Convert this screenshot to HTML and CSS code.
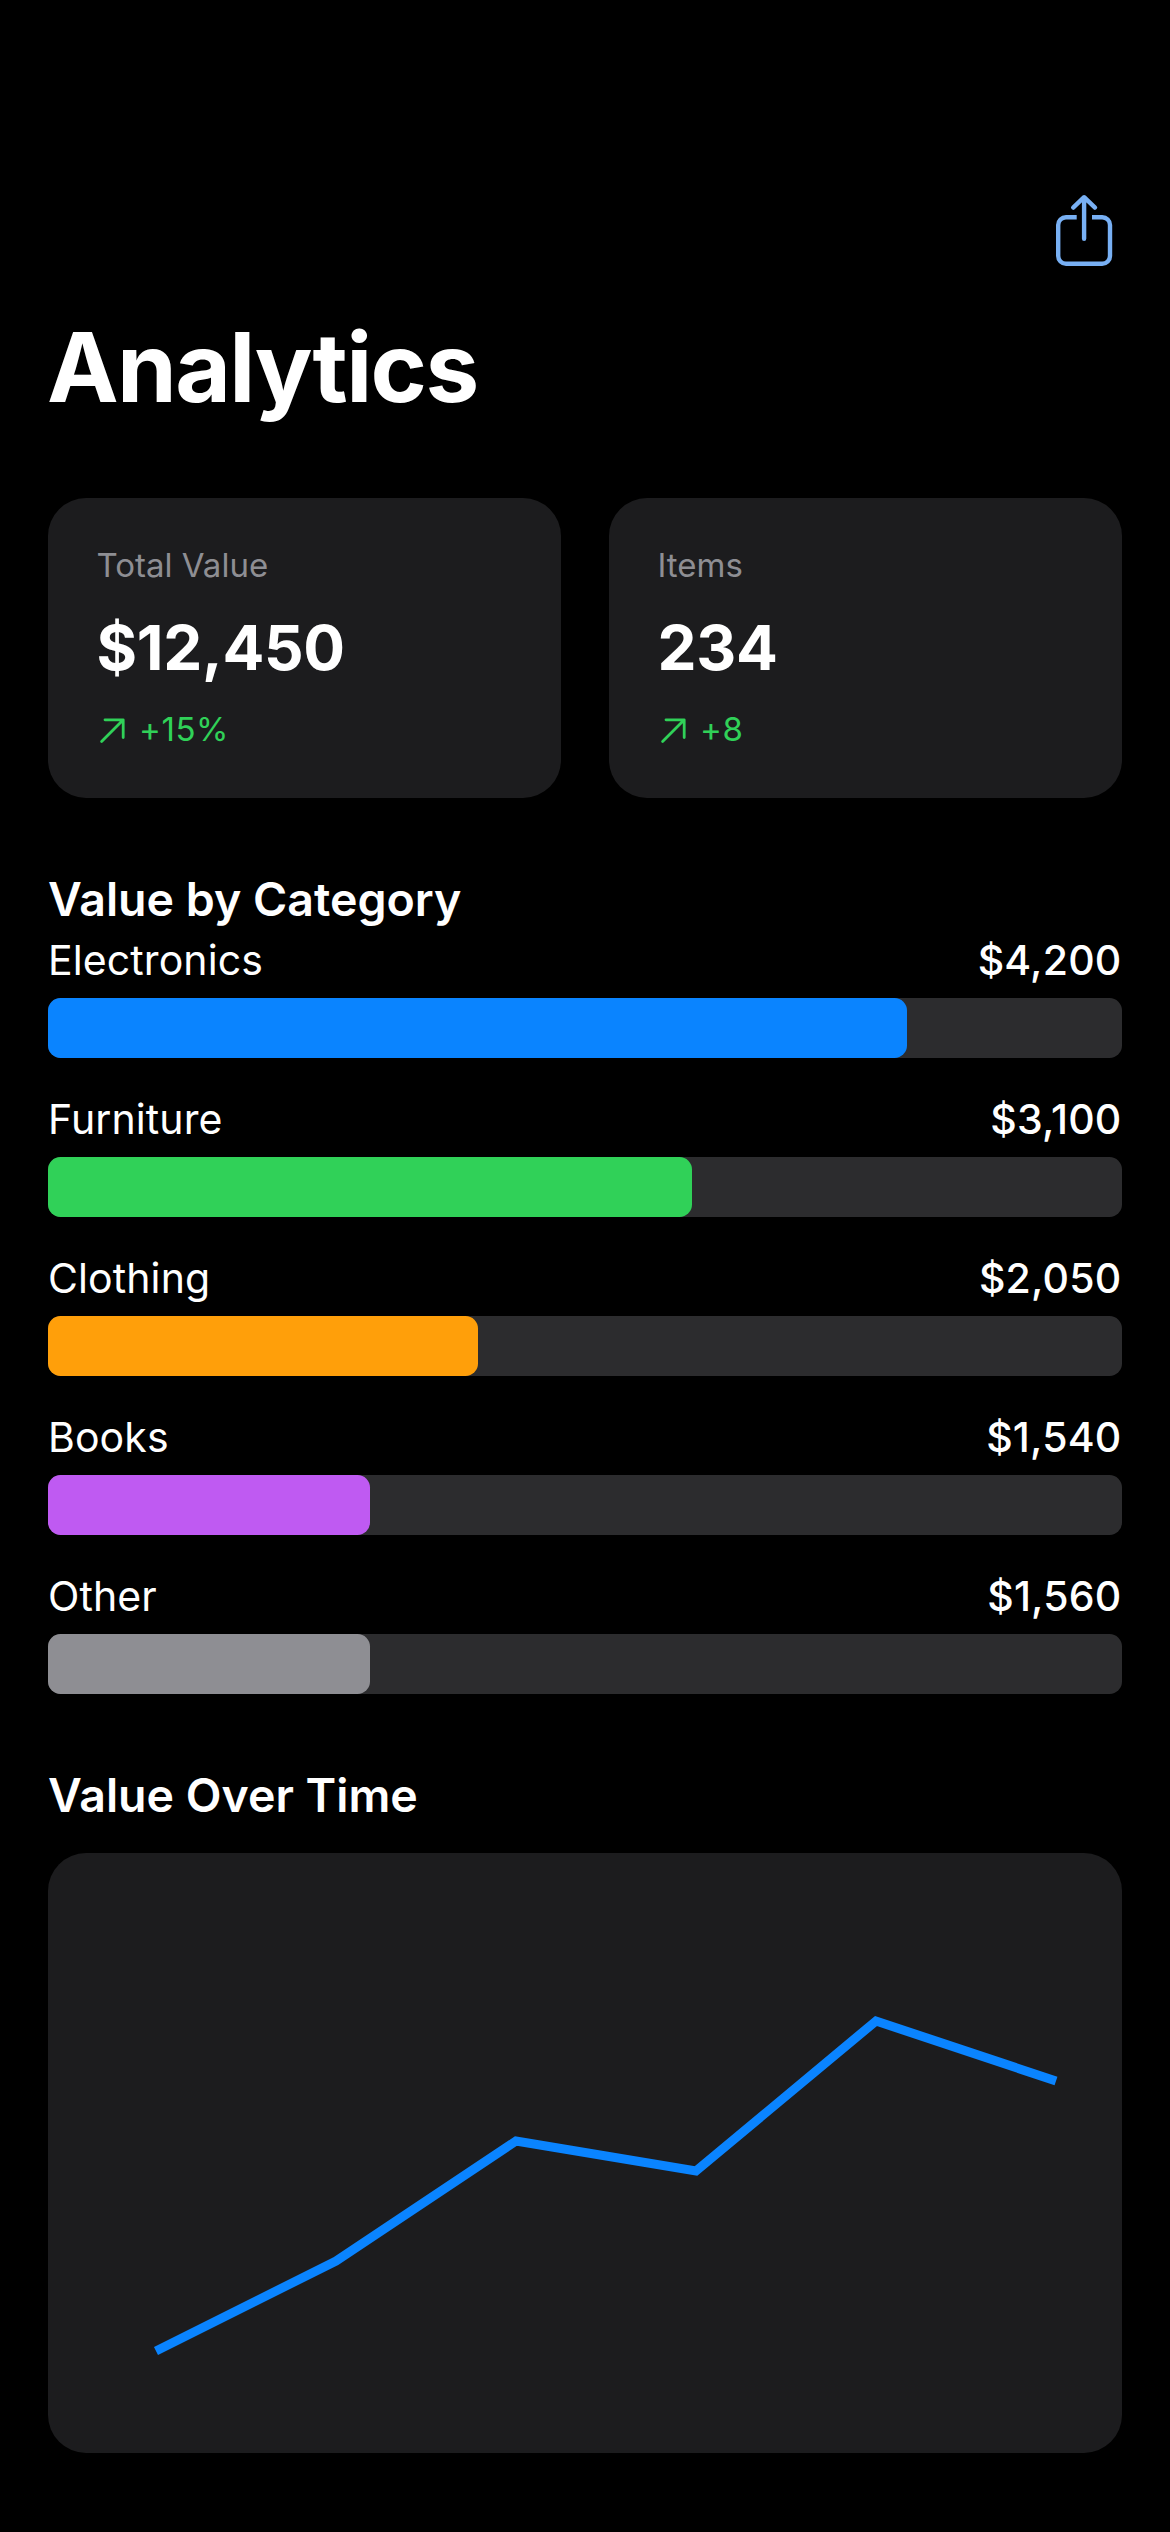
FILE: index.html
```html
<!DOCTYPE html>
<html lang="en">
<head>
<meta charset="utf-8">
<title>Analytics</title>
<link rel="stylesheet" href="styles.css">
</head>
<body>
<main class="screen">
  <header class="toolbar">
    <svg class="share-icon" viewBox="0 0 60 76" aria-label="Share">
      <path d="M22.7 23.2H12A7.8 7.8 0 0 0 4.2 31V62A7.8 7.8 0 0 0 12 69.8H48.2A7.8 7.8 0 0 0 56 62V31A7.8 7.8 0 0 0 48.2 23.2H38"/>
      <path class="share-arrow" d="M30.1 44.8V3.4M19.2 13.6L30.1 3.2L41 13.6"/>
    </svg>
  </header>

  <h1 class="title">Analytics</h1>

  <section class="stats">
    <article class="stat">
      <div class="stat-label">Total Value</div>
      <div class="stat-value">$12,450</div>
      <div class="stat-delta">
        <svg class="trend-icon" viewBox="0 0 30 30"><path d="M4.6 26.4L26 5M8 4.8H26.2V22.6"/></svg>
        <span>+15%</span>
      </div>
    </article>
    <article class="stat">
      <div class="stat-label">Items</div>
      <div class="stat-value">234</div>
      <div class="stat-delta">
        <svg class="trend-icon" viewBox="0 0 30 30"><path d="M4.6 26.4L26 5M8 4.8H26.2V22.6"/></svg>
        <span>+8</span>
      </div>
    </article>
  </section>

  <section class="categories">
    <h2 class="heading">Value by Category</h2>
    <div class="category-list">
      <div class="category">
        <div class="category-row"><span>Electronics</span><span class="amount">$4,200</span></div>
        <div class="track"><div class="fill blue" style="width:80%"></div></div>
      </div>
      <div class="category">
        <div class="category-row"><span>Furniture</span><span class="amount">$3,100</span></div>
        <div class="track"><div class="fill green" style="width:60%"></div></div>
      </div>
      <div class="category">
        <div class="category-row"><span>Clothing</span><span class="amount">$2,050</span></div>
        <div class="track"><div class="fill orange" style="width:40%"></div></div>
      </div>
      <div class="category">
        <div class="category-row"><span>Books</span><span class="amount">$1,540</span></div>
        <div class="track"><div class="fill purple" style="width:30%"></div></div>
      </div>
      <div class="category">
        <div class="category-row"><span>Other</span><span class="amount">$1,560</span></div>
        <div class="track"><div class="fill gray" style="width:30%"></div></div>
      </div>
    </div>
  </section>

  <section class="history">
    <h2 class="heading">Value Over Time</h2>
    <div class="chart">
      <svg class="chart-line" viewBox="0 0 1074 600"><polyline points="108,498 288,408 468,288 648,318 828,168 1008,228"/></svg>
    </div>
  </section>
</main>
</body>
</html>
```
FILE: styles.css
```css
* { box-sizing: border-box; margin: 0; }

body {
  background: #000;
  color: #fff;
  font-family: Inter, "Liberation Sans", sans-serif;
}

.screen {
  display: flex;
  flex-direction: column;
  height: 2532px;
  padding: 194px 48px 0;
}

.toolbar {
  display: flex;
  justify-content: flex-end;
  height: 112px;
  padding-right: 8px;
}

.share-icon {
  width: 60px;
  height: 76px;
  fill: none;
  stroke: #78b0f4;
  stroke-width: 4.4;
}

.share-arrow {
  stroke-linecap: round;
  stroke-linejoin: round;
}

.title {
  margin-left: -1px;
  font-size: 96px;
  font-weight: 700;
  line-height: 122px;
  letter-spacing: -1.6px;
}

.stats {
  display: grid;
  grid-template-columns: 1fr 1fr;
  gap: 48px;
  margin-top: 70px;
}

.stat {
  display: flex;
  flex-direction: column;
  gap: 21px;
  height: 300px;
  padding: 46px 48.5px 0;
  border-radius: 38px;
  background: #1c1c1e;
}

.stat-label {
  color: #8e8e93;
  font-size: 33px;
  line-height: 43px;
}

.stat-value {
  font-size: 62px;
  font-weight: 700;
  line-height: 79px;
  letter-spacing: -0.3px;
}

.stat-delta {
  display: flex;
  align-items: center;
  gap: 12.5px;
  color: #30d158;
  font-size: 33px;
  line-height: 43px;
  letter-spacing: 0.6px;
}

.trend-icon {
  width: 30px;
  height: 30px;
  fill: none;
  stroke: currentColor;
  stroke-width: 2.8;
  stroke-linecap: round;
  stroke-linejoin: round;
}

.categories,
.history {
  margin-top: 72px;
}

.heading {
  font-size: 46.5px;
  font-weight: 600;
  line-height: 58px;
}

.category-list {
  display: flex;
  flex-direction: column;
  gap: 36px;
  margin-top: 7px;
}

.category {
  display: flex;
  flex-direction: column;
  gap: 12px;
}

.category-row {
  display: flex;
  justify-content: space-between;
  padding-right: 0.5px;
  font-size: 41px;
  line-height: 51px;
  letter-spacing: 0.1px;
}

.amount {
  font-weight: 500;
  letter-spacing: 0.2px;
}

.track {
  height: 60px;
  border-radius: 12.5px;
  background: #2c2c2e;
}

.fill {
  height: 100%;
  border-radius: 12.5px;
}

.blue { background: #0a84ff; }
.green { background: #30d158; }
.orange { background: #ff9f0a; }
.purple { background: #bf5af2; }
.gray { background: #8e8e93; }

.chart {
  height: 600px;
  margin-top: 29px;
  border-radius: 38px;
  background: #1c1c1e;
}

.chart-line {
  display: block;
  width: 100%;
  height: 100%;
  fill: none;
  stroke: #0a84ff;
  stroke-width: 9;
}
```
